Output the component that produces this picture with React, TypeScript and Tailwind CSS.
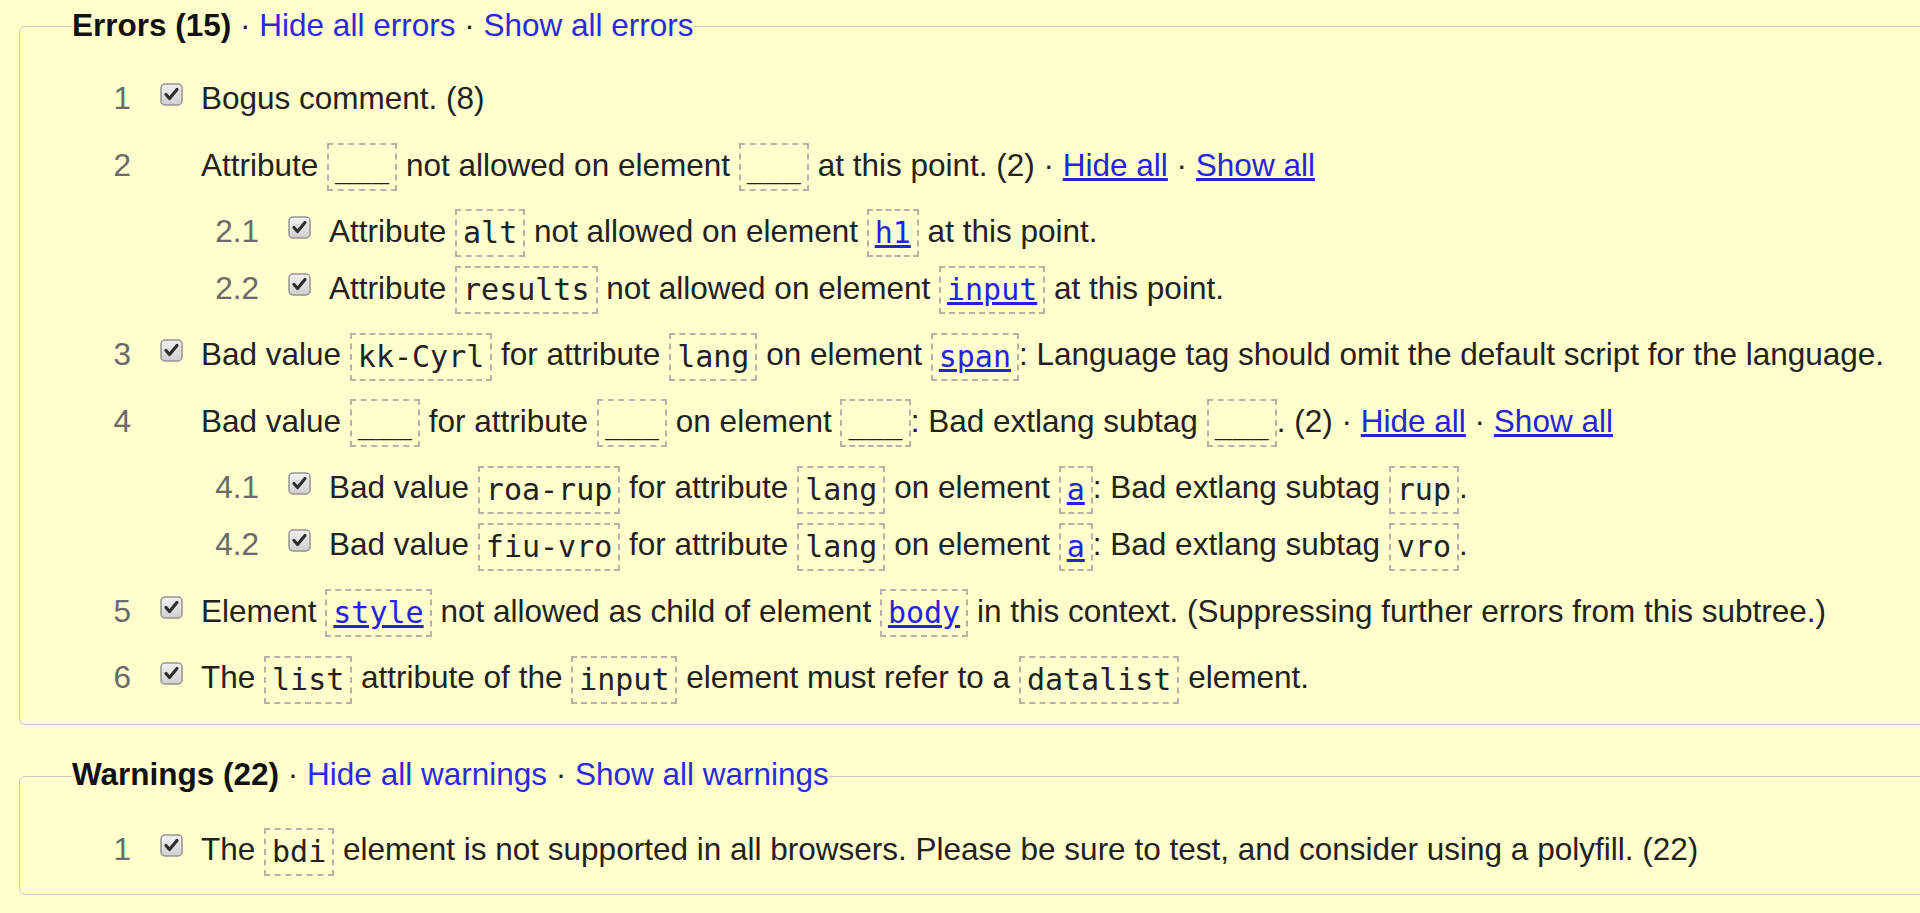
import React from "react";

function Check() {
  return (
    <svg width="23" height="23" viewBox="0 0 23 23">
      <defs>
        <linearGradient id="cbg" x1="0" y1="0" x2="0" y2="1">
          <stop offset="0" stopColor="#f2f2f2" />
          <stop offset="1" stopColor="#cfcfcf" />
        </linearGradient>
      </defs>
      <rect x="1" y="1" width="21" height="21" rx="4" fill="url(#cbg)" stroke="#949494" strokeWidth="1.5" />
      <path d="M6 11.5 L9.5 15.5 L17 6.5" fill="none" stroke="#2e2e2e" strokeWidth="3.2" strokeLinecap="round" strokeLinejoin="round" />
    </svg>
  );
}

function Code({ children, link }: { children: React.ReactNode; link?: boolean }) {
  return (
    <code className="inline-block border-2 border-dashed border-[#b4b4a6] px-[6px] text-[30px] leading-[44px] align-middle font-['DejaVu_Sans_Mono',monospace]">
      {link ? <a href="#" className="text-[#2424dc] underline">{children}</a> : children}
    </code>
  );
}

function Blank() {
  return <Code>___</Code>;
}

function Row({ num, checked, children }: { num: string; checked?: boolean; children: React.ReactNode }) {
  return (
    <div className="flex leading-[57px] whitespace-nowrap">
      <span className="w-[111px] shrink-0 text-right text-[#6a6a6a]">{num}</span>
      <span className="ml-[29px] mt-[13px] w-[23px] h-[23px] shrink-0">{checked && <Check />}</span>
      <span className="ml-[18px]">{children}</span>
    </div>
  );
}

function Toggles() {
  return (
    <>
      {" · "}
      <a href="#" className="text-[#2424dc] underline">Hide all</a>
      {" · "}
      <a href="#" className="text-[#2424dc] underline">Show all</a>
    </>
  );
}

function Legend({ title, what }: { title: string; what: string }) {
  return (
    <legend className="ml-[52px] leading-[36px] pb-[4px] whitespace-nowrap">
      <strong className="font-bold text-[#111]">{title}</strong>
      {" · "}
      <a href="#" className="text-[#2a2ae0]">Hide all {what}</a>
      {" · "}
      <a href="#" className="text-[#2a2ae0]">Show all {what}</a>
    </legend>
  );
}

export default function App() {
  return (
    <div className="min-h-screen overflow-hidden bg-[#fffecc] pl-[19px] pt-[6.5px] text-[31.5px] text-[#222] font-['Liberation_Sans',Arial,sans-serif]">
      <fieldset className="-mr-[40px] border border-[#c8c8c8] rounded-[6px] pt-[23px] pb-[18px]">
        <Legend title="Errors (15)" what="errors" />
        <ol>
          <li>
            <Row num="1" checked>Bogus comment. (8)</Row>
          </li>
          <li className="mt-[10px]">
            <Row num="2">
              Attribute <Blank /> not allowed on element <Blank /> at this point. (2)
              <Toggles />
            </Row>
            <ol className="pl-[128px] mt-[9px]">
              <li>
                <Row num="2.1" checked>
                  Attribute <Code>alt</Code> not allowed on element <Code link>h1</Code> at this point.
                </Row>
              </li>
              <li>
                <Row num="2.2" checked>
                  Attribute <Code>results</Code> not allowed on element <Code link>input</Code> at this point.
                </Row>
              </li>
            </ol>
          </li>
          <li className="mt-[9.5px]">
            <Row num="3" checked>
              Bad value <Code>kk-Cyrl</Code> for attribute <Code>lang</Code> on element <Code link>span</Code>: Language tag should omit the default script for the language.
            </Row>
          </li>
          <li className="mt-[9.5px]">
            <Row num="4">
              Bad value <Blank /> for attribute <Blank /> on element <Blank />: Bad extlang subtag <Blank />. (2)
              <Toggles />
            </Row>
            <ol className="pl-[128px] mt-[9.5px]">
              <li>
                <Row num="4.1" checked>
                  Bad value <Code>roa-rup</Code> for attribute <Code>lang</Code> on element <Code link>a</Code>: Bad extlang subtag <Code>rup</Code>.
                </Row>
              </li>
              <li>
                <Row num="4.2" checked>
                  Bad value <Code>fiu-vro</Code> for attribute <Code>lang</Code> on element <Code link>a</Code>: Bad extlang subtag <Code>vro</Code>.
                </Row>
              </li>
            </ol>
          </li>
          <li className="mt-[9.5px]">
            <Row num="5" checked>
              Element <Code link>style</Code> not allowed as child of element <Code link>body</Code> in this context. (Suppressing further errors from this subtree.)
            </Row>
          </li>
          <li className="mt-[9.5px]">
            <Row num="6" checked>
              The <Code>list</Code> attribute of the <Code>input</Code> element must refer to a <Code>datalist</Code> element.
            </Row>
          </li>
        </ol>
      </fieldset>

      <fieldset className="-mr-[40px] mt-[31px] border border-[#c8c8c8] rounded-[6px] pt-[25px] pb-[16px]">
        <Legend title="Warnings (22)" what="warnings" />
        <ol>
          <li>
            <Row num="1" checked>
              The <Code>bdi</Code> element is not supported in all browsers. Please be sure to test, and consider using a polyfill. (22)
            </Row>
          </li>
        </ol>
      </fieldset>
    </div>
  );
}
